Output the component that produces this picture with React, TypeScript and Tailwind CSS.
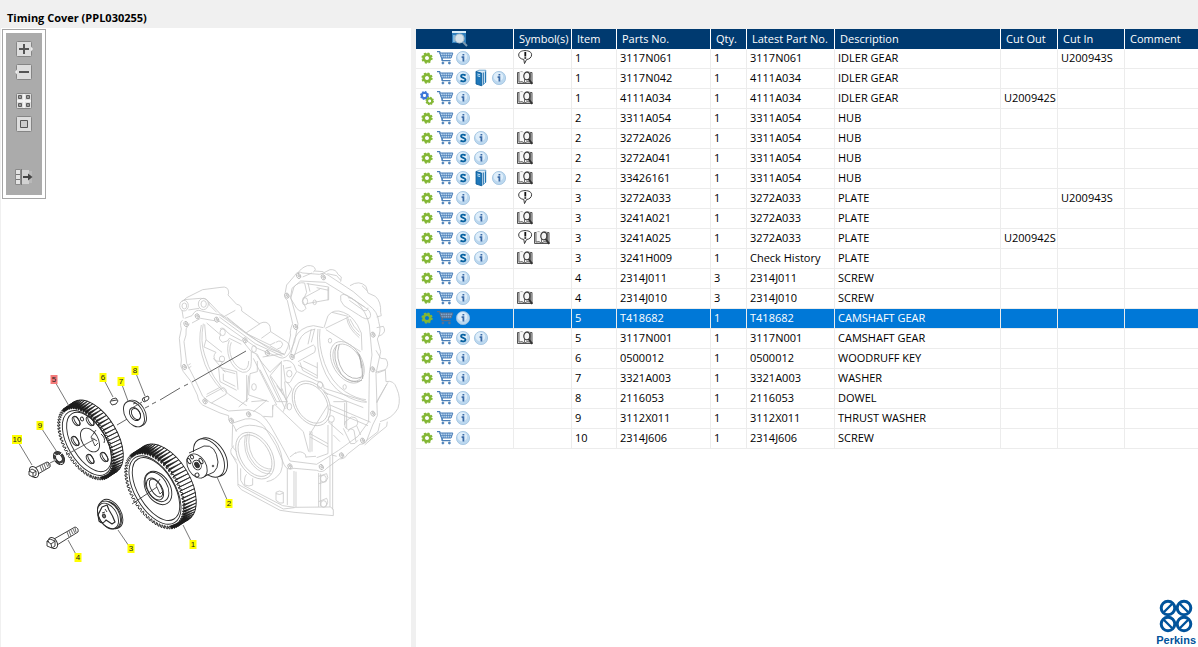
import React, { useState } from 'react';

type Action = 'gear' | 'gears' | 'cart' | 'super' | 'book' | 'info';
type Mark = 'note' | 'history';

interface Part {
  actions: Action[];
  marks: Mark[];
  item: string;
  partNo: string;
  qty: string;
  latest: string;
  description: string;
  cutOut?: string;
  cutIn?: string;
}

const basic: Action[] = ['gear', 'cart', 'info'];
const superseded: Action[] = ['gear', 'cart', 'super', 'info'];
const withBook: Action[] = ['gear', 'cart', 'super', 'book', 'info'];

const parts: Part[] = [
  { actions: basic, marks: ['note'], item: '1', partNo: '3117N061', qty: '1', latest: '3117N061', description: 'IDLER GEAR', cutIn: 'U200943S' },
  { actions: withBook, marks: ['history'], item: '1', partNo: '3117N042', qty: '1', latest: '4111A034', description: 'IDLER GEAR' },
  { actions: ['gears', 'cart', 'info'], marks: ['history'], item: '1', partNo: '4111A034', qty: '1', latest: '4111A034', description: 'IDLER GEAR', cutOut: 'U200942S' },
  { actions: basic, marks: [], item: '2', partNo: '3311A054', qty: '1', latest: '3311A054', description: 'HUB' },
  { actions: superseded, marks: ['history'], item: '2', partNo: '3272A026', qty: '1', latest: '3311A054', description: 'HUB' },
  { actions: superseded, marks: ['history'], item: '2', partNo: '3272A041', qty: '1', latest: '3311A054', description: 'HUB' },
  { actions: withBook, marks: ['history'], item: '2', partNo: '33426161', qty: '1', latest: '3311A054', description: 'HUB' },
  { actions: basic, marks: ['note'], item: '3', partNo: '3272A033', qty: '1', latest: '3272A033', description: 'PLATE', cutIn: 'U200943S' },
  { actions: superseded, marks: ['history'], item: '3', partNo: '3241A021', qty: '1', latest: '3272A033', description: 'PLATE' },
  { actions: superseded, marks: ['note', 'history'], item: '3', partNo: '3241A025', qty: '1', latest: '3272A033', description: 'PLATE', cutOut: 'U200942S' },
  { actions: superseded, marks: ['history'], item: '3', partNo: '3241H009', qty: '1', latest: 'Check History', description: 'PLATE' },
  { actions: basic, marks: [], item: '4', partNo: '2314J011', qty: '3', latest: '2314J011', description: 'SCREW' },
  { actions: basic, marks: ['history'], item: '4', partNo: '2314J010', qty: '3', latest: '2314J010', description: 'SCREW' },
  { actions: basic, marks: [], item: '5', partNo: 'T418682', qty: '1', latest: 'T418682', description: 'CAMSHAFT GEAR' },
  { actions: superseded, marks: ['history'], item: '5', partNo: '3117N001', qty: '1', latest: '3117N001', description: 'CAMSHAFT GEAR' },
  { actions: basic, marks: [], item: '6', partNo: '0500012', qty: '1', latest: '0500012', description: 'WOODRUFF KEY' },
  { actions: basic, marks: [], item: '7', partNo: '3321A003', qty: '1', latest: '3321A003', description: 'WASHER' },
  { actions: basic, marks: [], item: '8', partNo: '2116053', qty: '1', latest: '2116053', description: 'DOWEL' },
  { actions: basic, marks: [], item: '9', partNo: '3112X011', qty: '1', latest: '3112X011', description: 'THRUST WASHER' },
  { actions: basic, marks: [], item: '10', partNo: '2314J606', qty: '1', latest: '2314J606', description: 'SCREW' },
];

/* ---------- row icons ---------- */

const Cog = ({ cx, cy, r, fill, hole }: { cx: number; cy: number; r: number; fill: string; hole: string }) => (
  <g>
    <circle cx={cx} cy={cy} r={r * 0.58} fill="none" stroke={fill} strokeWidth={r * 0.5} />
    <circle cx={cx} cy={cy} r={r * 0.84} fill="none" stroke={fill} strokeWidth={r * 0.34} strokeDasharray={`${r * 0.36} ${r * 0.3}`} />
    <circle cx={cx} cy={cy} r={r * 0.32} fill={hole} />
  </g>
);

const InfoDisc = () => (
  <>
    <circle cx="9" cy="9" r="6.6" fill="#bcd8ef" stroke="#9dc0de" strokeWidth="0.8" />
    <ellipse cx="8.4" cy="7.8" rx="4.8" ry="4.6" fill="#deedf9" />
  </>
);

const ActionIcon = ({ kind, selected }: { kind: Action; selected: boolean }) => {
  const hole = selected ? '#0078d7' : '#ffffff';
  return (
    <svg viewBox="0 0 18 18" className="block size-[18px]">
      {kind === 'gear' && <Cog cx={9} cy={9} r={5.6} fill="#83b735" hole={hole} />}
      {kind === 'gears' && (
        <>
          <Cog cx={6.5} cy={6.5} r={4.4} fill="#3f78d8" hole={hole} />
          <Cog cx={11.7} cy={12} r={4.2} fill="#83b735" hole={hole} />
        </>
      )}
      {kind === 'cart' && (
        <g fill="none" stroke={selected ? '#5a6f8a' : '#4a7fb8'}>
          <path d="M1 2.6h2.6l3 9h8" strokeWidth="1.3" />
          <path d="M3.8 4h13l-1.7 5H5.6z" fill={selected ? '#7fa9d4' : '#bcd5ee'} strokeWidth="1" />
          <path d="M4.6 6.5h11.4M6.8 4l.6 5M9.2 4v5M11.6 4v5M14 4l-.5 5" strokeWidth="0.7" />
          <path d="M6.4 9l-.6 2.8" strokeWidth="1" />
          <circle cx="6.9" cy="14" r="1" fill="#4a7fb8" strokeWidth="0.8" />
          <circle cx="13.4" cy="14" r="1" fill="#4a7fb8" strokeWidth="0.8" />
        </g>
      )}
      {kind === 'info' && (
        <>
          <InfoDisc />
          <path d="M9.4 5v1.6M7.6 8.2h1.8v4.4" fill="none" stroke="#3a6aa6" strokeWidth="1.8" />
        </>
      )}
      {kind === 'super' && (
        <>
          <InfoDisc />
          <path d="M11.6 6.5C10 5.2 6.9 5.3 7 7.2c.1 1.9 4.5 1.400 4.5 3.500 0 2-3.300 2.100-5 .8" fill="none" stroke="#06609f" strokeWidth="1.8" />
        </>
      )}
      {kind === 'book' && (
        <>
          <path d="M4 2.500l3-1.300h6.800v12L11 16H8.400z" fill="#dcebf7" stroke="#3d8cc4" strokeWidth="0.7" />
          <path d="M4 2.600l5.600 1.500V16.800L4 15z" fill="#1f78ba" stroke="#085896" strokeWidth="0.8" />
          <path d="M11.300 3.500v11.600M13.400 2.600v11" stroke="#1b6fae" strokeWidth="1" />
          <path d="M5.400 5l2.800.8M5.400 6.800l2.800.8" stroke="#c4e0f4" strokeWidth="1" />
        </>
      )}
    </svg>
  );
};

const MarkIcon = ({ kind }: { kind: Mark }) => (
  <svg viewBox="1 0 17 18" className="block h-[18px] w-[17px]" role="img" aria-label={kind === 'note' ? 'Note' : 'History'}>
    {kind === 'note' ? (
      <>
        <path d="M9 1.600c4.200 0 6.600 1.700 6.600 4.200 0 2.600-2.200 4.400-5 4.700L8.500 14.600l-.7-4.200C4.700 10.100 2.700 8.400 2.700 6c0-2.700 2.500-4.400 6.300-4.400z" fill="#fff" stroke="#3a3a3a" strokeWidth="1" />
        <path d="M9.300 3v4.400M9.300 8.300v1.500" stroke="#111" strokeWidth="1.8" />
      </>
    ) : (
      <>
        <path d="M1.500 3.500H3L6 3l2.500 1.200L11 3l4 .5h1v11H1.500z" fill="#d2d2d2" stroke="#555" strokeWidth="1" />
        <path d="M3 3v10l3-.4 2.600 1.500 2.500-1.500 3.400.4V3.200M8.500 4.200v9.500" fill="#f6f6f6" stroke="#5c5c5c" strokeWidth="0.9" />
        <ellipse cx="10.800" cy="7" rx="3" ry="3.800" fill="#f4f4f4" stroke="#3c3c3c" strokeWidth="1.2" />
        <path d="M12.500 10l3.800 4.800" stroke="#333" strokeWidth="2" />
      </>
    )}
  </svg>
);

const actionLabels: Record<Action, string> = {
  gear: 'Select part',
  gears: 'Select kit',
  cart: 'Add to cart',
  super: 'Supersession',
  book: 'Where used',
  info: 'Part information',
};

/* ---------- exploded view ---------- */

const TILT = (-31 * Math.PI) / 180;

const onEllipse = (cx: number, cy: number, a: number, b: number, t: number) => {
  const x = b * Math.cos(t);
  const y = a * Math.sin(t);
  return [cx + x * Math.cos(TILT) - y * Math.sin(TILT), cy + x * Math.sin(TILT) + y * Math.cos(TILT)];
};

const pt = (p: number[]) => `${p[0].toFixed(1)} ${p[1].toFixed(1)}`;

const Teeth = ({ cx, cy, a, b, dx, dy }: { cx: number; cy: number; a: number; b: number; dx: number; dy: number }) => {
  const count = 64;
  const step = (Math.PI * 2) / count;
  const rim: string[] = [];
  const flanks: string[] = [];
  for (let i = 0; i < count; i++) {
    const t = i * step;
    const tip = onEllipse(cx, cy, a, b, t);
    const tipEnd = onEllipse(cx, cy, a, b, t + step * 0.4);
    const root = onEllipse(cx, cy, a - 3, b - 2, t + step * 0.6);
    const rootEnd = onEllipse(cx, cy, a - 3, b - 2, t + step * 0.9);
    rim.push([tip, tipEnd, root, rootEnd].map(pt).join('L'));
    // helical teeth: the far end is turned slightly against the near end
    const far = onEllipse(cx + dx, cy + dy, a, b, t + step * 0.8);
    if ((tip[0] - cx) * 0.9 - (tip[1] - cy) * 0.55 > -6) {
      flanks.push(`M${pt(root)}L${pt(far)}L${pt(tipEnd)}Z`);
    }
  }
  return (
    <g>
      <ellipse cx={cx + dx} cy={cy + dy} rx={b} ry={a} transform={`rotate(-31 ${cx + dx} ${cy + dy})`} fill="#fff" stroke="#222" strokeWidth="0.9" />
      <path d={`M${rim.join('L')}Z`} fill="#fff" stroke="#222" strokeWidth="0.9" />
      <path d={flanks.join('')} fill="#1c1c1c" stroke="#1c1c1c" strokeWidth="0.7" />
    </g>
  );
};

const Oval = ({ x, y, rx, ry, fill = 'none' }: { x: number; y: number; rx: number; ry: number; fill?: string }) => (
  <ellipse cx={x} cy={y} rx={rx} ry={ry} transform={`rotate(-31 ${x} ${y})`} fill={fill} />
);

const bolts = [
  [48, 207], [82, 184], [140, 194], [225, 256], [292, 294], [366, 306], [377, 216], [351, 122], [386, 63], [460, 67],
  [609, 239], [608, 343], [609, 476], [578, 557], [515, 601], [454, 636], [360, 634], [236, 478], [184, 497], [105, 439], [43, 336],
];

const Cover = () => (
  <g transform="translate(170 255) scale(0.3333)" fill="none" stroke="#c6c6c6" strokeWidth="2.4" strokeLinejoin="round">
    {/* upper left boss and rear edge */}
    <path d="M36 140L50 128L98 104L153 97Q176 92 176 114L174 120L200 148Q217 150 215 168L268 206Q292 194 300 214L302 230L352 262Q362 270 358 284" />
    <path d="M42 134L92 130Q118 130 118 150L140 172M55 165L88 160M36 165L40 190M116 140L160 186L196 166M170 186L228 234L270 206M230 236L300 270L316 262M318 262Q334 252 338 268Q336 280 322 282M300 272L332 290M274 250L302 230" />
    <ellipse cx="42" cy="152" rx="13" ry="16" /><ellipse cx="43" cy="153" rx="7" ry="9" />
    <ellipse cx="100" cy="147" rx="15" ry="17" /><ellipse cx="101" cy="147" rx="8" ry="10" />
    {/* flange */}
    <path d="M38 196Q28 200 34 222L28 250L34 315Q28 335 40 350L62 378L82 420Q86 448 108 455L150 474L176 482Q174 498 186 505L226 492Q260 486 284 516L318 572L342 628Q350 648 372 640L440 646Q458 656 470 640L508 612Q526 612 532 598L570 568Q588 568 592 552L608 510L622 482L620 420L618 356L632 290L622 252Q636 230 626 200Q624 170 596 150L550 110L474 60Q462 50 448 58L398 54Q382 46 374 62L350 90L346 112Q340 128 352 136L368 206Q358 230 362 240L354 276L344 298L300 282L240 244L150 180L94 168Q78 160 66 182L44 190" />
    <path d="M58 206Q44 220 48 240L42 260L50 325L74 372L98 424L120 442L176 468L236 464Q276 470 300 510L336 574L360 618L440 628L506 586L564 544L596 500L598 356L606 300L598 210Q590 172 560 140L466 82L392 78L366 100L362 126L384 206L374 260L360 292Q346 314 330 308L262 280L150 200L92 190L66 204" />
    <path d="M154 178L262 258L344 300M148 186L256 266L338 304" />
    {/* side arm window */}
    <path d="M372 96Q384 80 404 84L410 112L398 138L408 160Q396 178 380 160L362 130ZM410 86L476 96V134L410 146M398 130L450 102M440 98L476 106M474 98V136M414 84L420 110" />
    <ellipse cx="405" cy="139" rx="8" ry="11" /><ellipse cx="434" cy="142" rx="5" ry="7" />
    <path d="M384 56Q390 40 412 32Q434 30 436 44L430 52M398 66L426 54M452 58L480 44Q498 42 504 58L514 66L512 80M434 48L460 50M540 92Q568 74 588 94L594 114L616 124Q634 140 632 172L634 182L620 186M576 92L592 108M472 56L500 62L512 76" />
    <path d="M512 122Q520 114 536 124L592 162Q606 174 600 188Q590 198 566 180L522 152Q508 138 512 122ZM534 128Q546 126 556 138L584 156M538 136L580 166Q594 170 594 158" />
    {/* left chamber */}
    <path d="M100 206Q90 260 104 300Q124 372 176 418L230 452M94 210Q84 260 96 300Q110 360 160 410M104 208L108 254L156 292M110 204L152 240Q142 252 158 262L172 258L178 250L214 268M108 254L102 276L138 292Q126 304 138 318L158 320M150 222Q160 214 170 230L182 240L216 258M158 320L146 340L150 380L200 406M152 338L200 350L204 404M158 346L196 356M160 356V376L196 394M130 310L166 352" />
    <path d="M178 256Q168 280 178 310Q190 344 218 352Q244 354 244 320L244 290L218 258M184 262Q174 284 186 312Q200 340 220 344Q236 344 236 318M244 290L262 298L330 440M250 310L320 450M262 318V350L240 356L236 420L296 440M258 298Q274 322 300 352L336 318M278 306L340 296M302 360L334 322V408L300 360M270 344L320 440L352 440M300 364L346 462M230 360V440M236 362L230 440" />
    <ellipse cx="158" cy="232" rx="8" ry="10" /><ellipse cx="156" cy="312" rx="8" ry="9" /><ellipse cx="252" cy="282" rx="7" ry="10" /><ellipse cx="252" cy="396" rx="7" ry="10" />
    <path d="M108 426L160 398Q172 402 168 418L124 444M110 418L152 396M55 330L62 326M54 340L64 334M244 440L290 436L250 470M206 456L236 430" />
    {/* centre bore */}
    <Oval x={424} y={445} rx={51} ry={72} /><Oval x={424} y={445} rx={45} ry={64} />
    <path d="M340 318Q360 312 372 330L380 350L366 372Q360 390 346 380L340 330M346 340L364 336M344 380L350 440L340 470M350 380L366 402L350 432L352 462M382 350L440 378Q462 380 462 400L590 440M384 330L442 362M390 322L398 346L442 370V322M400 318L442 338M460 404L474 420M462 412L580 458M370 300L430 270Q440 276 434 292L384 320M362 300L374 250Q390 216 430 212L460 218M372 306L388 256Q398 230 436 222M424 222L414 268M434 222L424 262" />
    <ellipse cx="450" cy="390" rx="8" ry="10" /><ellipse cx="358" cy="356" rx="8" ry="10" /><ellipse cx="484" cy="492" rx="9" ry="10" /><ellipse cx="358" cy="455" rx="7" ry="10" />
    {/* right housing */}
    <path d="M444 222Q438 276 456 330Q476 390 520 418Q560 442 590 442M450 222Q444 270 464 326Q484 382 526 410Q560 432 588 434M462 218L474 182Q492 160 520 172Q552 182 574 234L576 286M466 220L540 184M468 224L572 290M486 172L534 184M530 188Q534 220 568 248M534 190Q544 224 570 242M540 192Q550 216 568 232" />
    <Oval x={532} y={322} rx={43} ry={68} /><Oval x={534} y={323} rx={38} ry={61} />
    <path d="M500 270Q484 310 514 358Q544 390 576 376M508 268Q494 310 520 350Q548 380 574 366M560 290Q572 300 574 340M568 298L576 340L578 372" stroke="#a8a8a8" />
    <ellipse cx="480" cy="257" rx="5" ry="7" /><ellipse cx="524" cy="396" rx="5" ry="7" />
    <path d="M620 218L640 214Q650 230 634 240L624 244M618 286L632 310L648 312Q660 330 644 346L622 354M616 352L646 344L648 380Q672 374 680 400Q694 430 684 460Q668 490 630 500M654 382L620 440M650 388L620 444M652 500L650 514L606 550L584 570M630 504L624 530L588 558" />
    <path d="M480 450L602 502M476 462L594 512M474 450L418 540M490 440L530 440V520M524 444V510M526 500Q520 520 536 524L560 512Q568 500 556 488L544 486ZM520 520L542 566Q556 570 564 556M560 512L572 540M420 528V592M426 530V590M420 536L474 566M420 546L474 576M474 510V596L440 608M486 500V600L500 604M474 500L520 540M534 530Q540 516 552 526L558 560M510 560L490 540" />
    <path d="M316 450L400 530L416 590M308 450V486L280 484M316 450Q308 446 308 464M330 402L352 440M340 420L320 392M376 596Q390 584 406 598L408 608M408 606L438 604M378 592L360 606M336 400L348 436" />
    {/* lower seal bore */}
    <Oval x={255} y={602} rx={50} ry={76} /><Oval x={255} y={602} rx={43} ry={68} />
    <path d="M196 528Q220 506 256 512Q300 516 324 570Q346 620 332 652Q316 676 290 680M200 530L190 510M188 506L186 574L200 590M192 572Q178 582 184 598L200 616M232 536Q220 590 256 630Q280 652 304 648M226 540Q216 592 248 630Q276 660 302 656M238 536Q230 590 262 624Q284 644 306 642" />
    <path d="M184 596L202 628L204 692L214 704L330 766L372 772L490 782V764L482 756L374 757L338 752L222 692L212 676V640M204 688L340 762L374 758M352 640V750M378 650V756M372 648V754M446 654V756M452 656V754M488 600V764M480 604V756M446 664L470 656Q478 668 468 680L446 686M446 740L470 730Q478 744 466 754M230 658Q222 664 224 690Q238 696 248 690V670M318 712Q328 704 340 712V744Q330 748 318 736ZM318 716Q330 722 340 714" />
    <ellipse cx="460" cy="671" rx="9" ry="10" /><ellipse cx="461" cy="747" rx="9" ry="10" />
    <g stroke="#b4b4b4" fill="#fff">
      {bolts.map(([x, y]) => (
        <g key={`${x}-${y}`}>
          <ellipse cx={x} cy={y} rx="6" ry="8" transform={`rotate(-25 ${x} ${y})`} />
          <ellipse cx={x + 1} cy={y} rx="2" ry="4" transform={`rotate(-25 ${x} ${y})`} />
        </g>
      ))}
    </g>
  </g>
);

const callouts = [
  { n: '5', x: 54, y: 380, to: [69, 406] },
  { n: '6', x: 103, y: 378, to: [113, 397] },
  { n: '7', x: 121, y: 382, to: [128, 401] },
  { n: '8', x: 135, y: 371, to: [145, 396] },
  { n: '9', x: 40, y: 426, to: [57, 452] },
  { n: '10', x: 17, y: 440, to: [32, 465] },
  { n: '3', x: 131, y: 549, to: [118, 530] },
  { n: '4', x: 78, y: 558, to: [68, 540] },
  { n: '1', x: 193, y: 545, to: [183, 525] },
  { n: '2', x: 229, y: 504, to: [217, 477] },
];

const ExplodedView = () => (
  <svg viewBox="1 28 410 619" className="block w-full" role="img" aria-label="Timing cover exploded view">
    <Cover />
    <g fill="none" stroke="#2a2a2a" strokeWidth="0.9" strokeLinejoin="round">
      <path d="M246 351L192 382M188 384L184 386M180 388L160 400M156 402L152 404M149 406L145 408M117 425L134 415" stroke="#555" />

      {/* camshaft gear */}
      <Teeth cx={86} cy={443} a={41} b={22} dx={9} dy={-6} />
      <Oval x={87} y={443} rx={19} ry={36} fill="#fff" />
      <Oval x={89} y={442} rx={17} ry={33} />
      <Oval x={90} y={440} rx={8} ry={13} fill="#fff" />
      <path d="M96 430L91 437L95 446L98 443M92 438L97 441" strokeWidth="0.8" />
      {[[76, 421], [90, 421], [75, 441], [90, 459], [104, 457]].map(([x, y]) => (
        <g key={`${x}-${y}`}>
          <Oval x={x} y={y} rx={3} ry={5} />
          <Oval x={x + 1} y={y} rx={2} ry={5} />
        </g>
      ))}
      <Oval x={82} y={419} rx={1.5} ry={2} />
      <path d="M101 434Q106 438 104 443" />
      <path d="M95 439L66 455M60 458L50 463" stroke="#555" />

      {/* idler gear */}
      <Teeth cx={155} cy={490} a={43} b={24} dx={11} dy={-7} />
      <Oval x={155} y={490} rx={20} ry={38} fill="#fff" />
      <Oval x={156} y={489} rx={18} ry={35} />
      <Oval x={158} y={488} rx={12} ry={18} />
      <Oval x={157} y={487} rx={10} ry={16} />
      <Oval x={155} y={489} rx={7} ry={12} fill="#fff" />
      <Oval x={156} y={488} rx={5} ry={10} />
      <path d="M160 479L156 485L160 494L163 491M157 487L132 504" strokeWidth="0.8" />

      {/* hub */}
      <g>
        <Oval x={212} y={457} rx={13} ry={21} fill="#fff" />
        <Oval x={209} y={458} rx={13} ry={21} fill="#fff" />
        <path d="M190 454L207 445Q218 452 216 470L200 478Z" fill="#fff" stroke="none" />
        <path d="M189 453L204 446Q216 444 218 462Q218 468 214 472L201 478" />
        <Oval x={197} y={466} rx={9} ry={13} fill="#fff" />
        <Oval x={197} y={465} rx={4} ry={5} />
        <Oval x={197} y={465} rx={2} ry={3} fill="#333" />
        <Oval x={192} y={457} rx={1.5} ry={2} />
        <Oval x={201} y={461} rx={1.5} ry={3} />
        <Oval x={197} y={475} rx={2} ry={2} />
        <Oval x={189} y={461} rx={1.5} ry={3} />
        <circle cx="213" cy="466" r="0.8" />
      </g>

      {/* plate */}
      <Oval x={111} y={514} rx={10} ry={16} fill="#fff" />
      <Oval x={110} y={515} rx={10} ry={15} />
      <Oval x={109} y={515} rx={10} ry={15} fill="#fff" />
      <Oval x={108} y={516} rx={9} ry={14} />
      <path d="M102 507L107 505L109 510Q113 516 115 522L112 524L106 520Q103 525 99 521L98 515Z" strokeWidth="1.2" />
      <path d="M105 509L107 512M102 513L105 512" />
      <Oval x={104} y={516} rx={1.5} ry={2} fill="#777" />

      {/* washers, key and dowel */}
      <Oval x={136} y={413} rx={9} ry={14} fill="#fff" />
      <Oval x={134} y={414} rx={9} ry={14} fill="#fff" />
      <Oval x={135} y={414} rx={5} ry={7} />
      <Oval x={136} y={414} rx={4} ry={6} />
      <Oval x={59} y={458} rx={5} ry={7} fill="#444" />
      <Oval x={59} y={458} rx={3} ry={4} fill="#fff" />
      <path d="M54 454L57 456M60 464L63 463M62 453L60 455M54 460L56 460" stroke="#fff" />
      <path d="M110 402Q111 398 116 398L118 401Q117 405 112 405ZM111 401L117 400" />
      <path d="M143 398L148 396Q150 398 148 400L144 402Q141 400 143 398ZM144 398L145 401" fill="#fff" />
      <path d="M132 408L142 402M133 404L136 403" stroke="#555" />

      {/* screws */}
      <path d="M35 468L47 462Q51 463 50 467L38 474Z" fill="#fff" />
      <path d="M40 466l2 5M42 465l2 5M44 464l2 5M46 463l2 4M48 462l1 4" strokeWidth="0.7" />
      <Oval x={34} y={472} rx={4} ry={6} fill="#fff" />
      <path d="M29 471L32 469L36 471L36 475L33 477L29 475ZM29 471L33 473L36 471M33 473V477" fill="#fff" />
      <path d="M54 539L75 527Q79 528 78 532L57 545Z" fill="#fff" />
      <path d="M67 532l2 5M69 531l2 5M71 530l2 4M73 529l2 4M75 528l1 4" strokeWidth="0.7" />
      <Oval x={53} y={543} rx={4} ry={6} fill="#fff" />
      <path d="M47 541L50 539L55 541L55 546L52 548L47 546ZM47 541L51 544L55 541M51 544L52 548" fill="#fff" />
    </g>

    {callouts.map((c) => (
      <g key={c.n}>
        <line x1={c.x} y1={c.y} x2={c.to[0]} y2={c.to[1]} stroke="#555" strokeWidth="0.8" />
        <rect x={c.n === '10' ? c.x - 5 : c.x - 3.5} y={c.y - 5} width={c.n === '10' ? 10 : 7} height="9" fill={c.n === '5' ? '#f47a7a' : '#ffff00'} />
        <text x={c.x} y={c.y + 2} textAnchor="middle" className="fill-[#222] font-['Liberation_Sans',sans-serif] text-[8px]">
          {c.n}
        </text>
      </g>
    ))}
  </svg>
);

/* ---------- viewer toolbar ---------- */

const Plate = () => <rect x="1.5" y="1.5" width="15" height="15" rx="1" fill="#dedede" stroke="#858585" />;

const ToolButton = ({ label, children }: { label: string; children: React.ReactNode }) => (
  <button type="button" aria-label={label} className="block size-[18px]">
    <svg viewBox="0 0 18 18" className="block size-[18px]">{children}</svg>
  </button>
);

const ViewerToolbar = () => (
  <div className="absolute left-px top-px border border-[#a6a6a6] bg-white p-[3px]">
    <div className="flex w-9 flex-col items-center bg-[#ababab] pb-[9px] pt-[7px]">
      <div className="flex flex-col gap-[5px]">
        <ToolButton label="Zoom in">
          <Plate />
          <path d="M16 6.500L18 9l-2 2.500z" fill="#eee" />
          <path d="M9 4v10M4 9h10" stroke="#555" strokeWidth="2" />
        </ToolButton>
        <ToolButton label="Zoom out">
          <Plate />
          <path d="M2 6.500L0 9l2 2.500z" fill="#eee" />
          <path d="M4 9h10" stroke="#555" strokeWidth="2" />
        </ToolButton>
      </div>
      <div className="mt-[11px] flex flex-col gap-[5px]">
        <ToolButton label="Fit to window">
          <Plate />
          <path d="M9 2v14M2 9h14" stroke="#f4f4f4" strokeWidth="2" />
          <path d="M3.500 3.500h3v3h-3zM11.500 3.500h3v3h-3zM3.500 11.500h3v3h-3zM11.500 11.500h3v3h-3z" fill="#999" stroke="#5e5e5e" />
        </ToolButton>
        <ToolButton label="Actual size">
          <Plate />
          <path d="M5.500 5.500h7v7h-7z" fill="#ccc" stroke="#555" />
        </ToolButton>
      </div>
      <div className="mt-[35px]">
        <ToolButton label="Hide list">
          <path d="M.5 1.500h5v15h-5z" fill="#e4e4e4" stroke="#8a8a8a" />
          <path d="M1 6.500h4M1 11.500h4" stroke="#777" />
          <path d="M7 2h7v14H7z" fill="#d2d2d2" />
          <path d="M14 3h3v12h-3z" fill="#b9b9b9" />
          <path d="M6.500 1v16" stroke="#777" />
          <path d="M8 9h7" stroke="#444" strokeWidth="2" />
          <path d="M13 5.500L17.500 9 13 12.500z" fill="#444" />
        </ToolButton>
      </div>
    </div>
  </div>
);

const PerkinsLogo = () => (
  <div className="flex flex-col items-center text-[#00539b]">
    <svg viewBox="0 0 34 34" className="block size-[34px]" fill="none" stroke="currentColor" strokeWidth="3">
      <circle cx="9" cy="9" r="6.8" />
      <circle cx="25" cy="9" r="6.8" />
      <circle cx="9" cy="25" r="6.8" />
      <circle cx="25" cy="25" r="6.8" />
      <path d="M5 13L13 5M21 5l8 8M5 21l8 8M21 29l8-8" strokeWidth="2.4" />
    </svg>
    <span className="font-['Liberation_Sans',Arial,sans-serif] text-[11px] font-bold leading-[14px]">Perkins</span>
  </div>
);

const headers = ['Symbol(s)', 'Item', 'Parts No.', 'Qty.', 'Latest Part No.', 'Description', 'Cut Out', 'Cut In', 'Comment'];

const App = () => {
  const [selected, setSelected] = useState(13);

  return (
    <div className="flex min-h-screen flex-col bg-[#f0f0f0] font-['Open_Sans','Noto_Sans',sans-serif] text-[11px] text-black">
      <header className="flex h-7 items-end px-[7px] pb-[2px]">
        <h1 className="text-[11px] font-bold leading-4">Timing Cover (PPL030255)</h1>
      </header>

      <main className="grid flex-1 grid-cols-[minmax(0,410px)_minmax(0,1fr)] gap-[5px] pl-px">
        <section className="relative bg-white">
          <ExplodedView />
          <ViewerToolbar />
        </section>

        <section className="flex flex-col bg-white">
          <table className="w-full table-fixed border-separate border-spacing-0 border-t border-[#f0f0f0]">
            <colgroup>
              <col className="w-[98px]" />
              <col className="w-[58px]" />
              <col className="w-[45px]" />
              <col className="w-[94px]" />
              <col className="w-9" />
              <col className="w-[88px]" />
              <col className="w-[166px]" />
              <col className="w-[57px]" />
              <col className="w-[67px]" />
              <col />
            </colgroup>
            <thead>
              <tr className="h-5 bg-[#003a70] text-left align-top text-white">
                <th className="border-r border-white p-0 pl-[35px]">
                  <button type="button" aria-label="Filter" className="block size-[18px]">
                    <svg viewBox="0 0 18 18" className="block size-[18px]">
                      <path d="M1 2h14v12H1z" fill="#2f7fbd" />
                      <path d="M1 2h14v2H1z" fill="#d9ecf8" />
                      <path d="M2 6h2v7H2z" fill="#7fb7de" />
                      <circle cx="8.500" cy="9.500" r="4.500" fill="#d6e2ea" stroke="#aebfcb" strokeWidth="1.2" />
                      <path d="M12 13l4 4" stroke="#7b9ab2" strokeWidth="2" />
                    </svg>
                  </button>
                </th>
                {headers.map((h) => (
                  <th key={h} className="whitespace-nowrap border-r border-white p-0 pl-[5px] font-medium leading-5 last:border-r-0">
                    {h}
                  </th>
                ))}
              </tr>
            </thead>
            <tbody>
              {parts.map((p, i) => {
                const active = i === selected;
                const cells = [p.item, p.partNo, p.qty, p.latest, p.description, p.cutOut, p.cutIn, ''];
                return (
                  <tr key={p.partNo} onClick={() => setSelected(i)} className={active ? 'h-5 bg-[#0078d7] align-top text-white' : 'h-5 align-top'}>
                    <td className="border-b border-r border-[#ececec] p-0 pl-[2px]">
                      <div className="flex">
                        {p.actions.map((a) => (
                          <button key={a} type="button" aria-label={actionLabels[a]}>
                            <ActionIcon kind={a} selected={active} />
                          </button>
                        ))}
                      </div>
                    </td>
                    <td className="border-b border-r border-[#ececec] p-0 pl-[3px]">
                      <div className="flex">
                        {p.marks.map((m) => (
                          <MarkIcon key={m} kind={m} />
                        ))}
                      </div>
                    </td>
                    {cells.map((c, k) => (
                      <td key={k} className="whitespace-nowrap border-b border-r border-[#ececec] p-0 pl-[3px] leading-[18px] last:border-r-0">
                        {c}
                      </td>
                    ))}
                  </tr>
                );
              })}
            </tbody>
          </table>

          <footer className="mt-auto flex justify-end pr-[2px]">
            <PerkinsLogo />
          </footer>
        </section>
      </main>
    </div>
  );
};

export default App;
